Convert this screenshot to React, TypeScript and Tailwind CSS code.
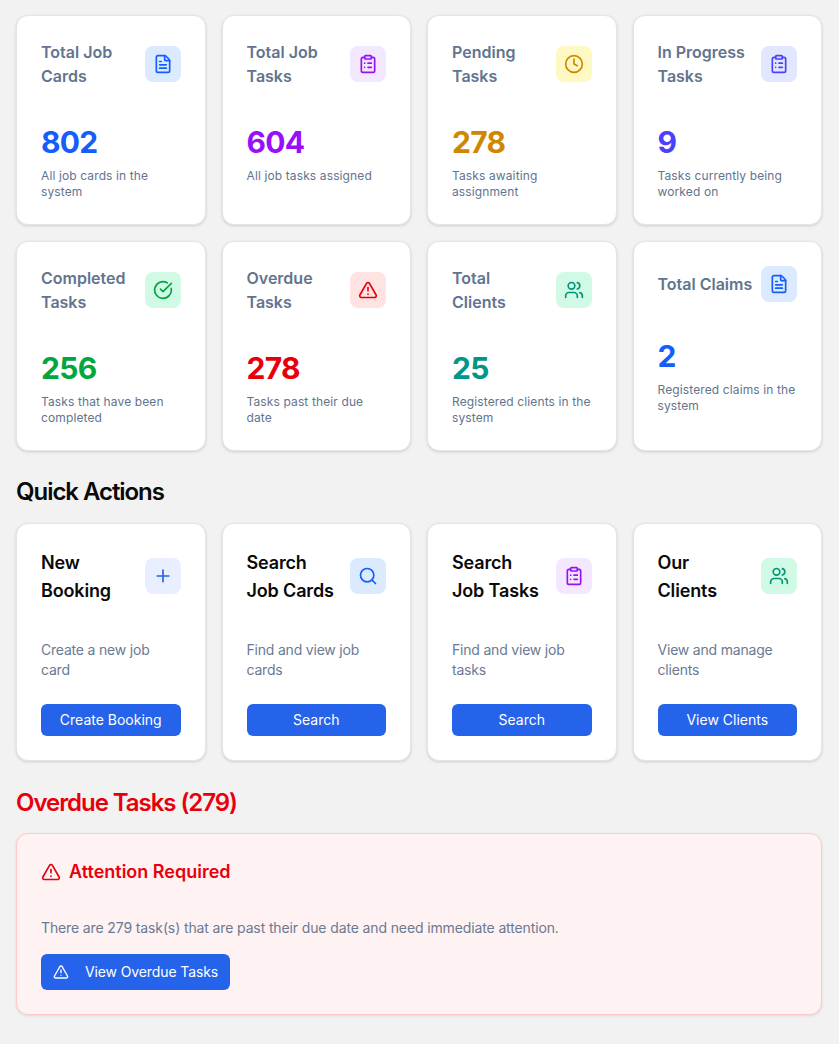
import { AlertTriangle, CircleCheckBig, ClipboardList, Clock, FileText, Plus, Search, Users } from 'lucide-react';
import type { LucideIcon } from 'lucide-react';

interface StatCardProps {
    title: string;
    value: string;
    description: string;
    icon: LucideIcon;
    valueClass: string;
    iconClass: string;
}

interface ActionCardProps {
    title: string;
    description: string;
    action: string;
    icon: LucideIcon;
    iconClass: string;
}

const stats: StatCardProps[] = [
    { title: 'Total Job Cards', value: '802', description: 'All job cards in the system', icon: FileText, valueClass: 'text-[#155dfc]', iconClass: 'bg-[#dbeafe] text-[#155dfc]' },
    { title: 'Total Job Tasks', value: '604', description: 'All job tasks assigned', icon: ClipboardList, valueClass: 'text-[#9810fa]', iconClass: 'bg-[#f3e8ff] text-[#9810fa]' },
    { title: 'Pending Tasks', value: '278', description: 'Tasks awaiting assignment', icon: Clock, valueClass: 'text-[#d08700]', iconClass: 'bg-[#fef9c2] text-[#d08700]' },
    { title: 'In Progress Tasks', value: '9', description: 'Tasks currently being worked on', icon: ClipboardList, valueClass: 'text-[#4b40fb]', iconClass: 'bg-[#e0e7ff] text-[#4b40fb]' },
    { title: 'Completed Tasks', value: '256', description: 'Tasks that have been completed', icon: CircleCheckBig, valueClass: 'text-[#00a63e]', iconClass: 'bg-[#d0fae5] text-[#00a63e]' },
    { title: 'Overdue Tasks', value: '278', description: 'Tasks past their due date', icon: AlertTriangle, valueClass: 'text-[#e7000b]', iconClass: 'bg-[#ffe2e2] text-[#e7000b]' },
    { title: 'Total Clients', value: '25', description: 'Registered clients in the system', icon: Users, valueClass: 'text-[#009689]', iconClass: 'bg-[#d0fae5] text-[#009673]' },
    { title: 'Total Claims', value: '2', description: 'Registered claims in the system', icon: FileText, valueClass: 'text-[#155dfc]', iconClass: 'bg-[#dbeafe] text-[#155dfc]' },
];

const actions: ActionCardProps[] = [
    { title: 'New Booking', description: 'Create a new job card', action: 'Create Booking', icon: Plus, iconClass: 'bg-[#e9efff] text-[#2563eb]' },
    { title: 'Search Job Cards', description: 'Find and view job cards', action: 'Search', icon: Search, iconClass: 'bg-[#dbeafe] text-[#155dfc]' },
    { title: 'Search Job Tasks', description: 'Find and view job tasks', action: 'Search', icon: ClipboardList, iconClass: 'bg-[#f3e8ff] text-[#9810fa]' },
    { title: 'Our Clients', description: 'View and manage clients', action: 'View Clients', icon: Users, iconClass: 'bg-[#d0fae5] text-[#009673]' },
];

function StatCard({ title, value, description, icon: Icon, valueClass, iconClass }: StatCardProps) {
    return (
        <div className="bg-white rounded-xl border border-[#e5e5e5] shadow-[0_1px_3px_rgba(0,0,0,0.15)] p-6 flex flex-col">
            <div className="flex items-center justify-between gap-2">
                <h3 className="text-base leading-6 font-semibold text-[#62748e]">{title}</h3>
                <div className={`w-9 h-9 rounded-lg flex items-center justify-center shrink-0 ${iconClass}`}>
                    <Icon size={20} />
                </div>
            </div>
            <div className={`mt-9 text-3xl font-bold tracking-[-0.7px] ${valueClass}`}>{value}</div>
            <p className="mt-2 text-xs tracking-[0.12px] text-[#62748e]">{description}</p>
        </div>
    );
}

function ActionCard({ title, description, action, icon: Icon, iconClass }: ActionCardProps) {
    return (
        <div className="bg-white rounded-xl border border-[#e5e5e5] shadow-[0_1px_3px_rgba(0,0,0,0.15)] px-6 pt-[25px] pb-6 flex flex-col">
            <div className="flex items-center justify-between gap-3">
                <h3 className="text-lg leading-7 font-semibold tracking-[-0.15px] text-[#0a0a0a]">{title}</h3>
                <div className={`w-9 h-9 mb-0.5 rounded-lg flex items-center justify-center shrink-0 ${iconClass}`}>
                    <Icon size={20} />
                </div>
            </div>
            <p className="mt-[35px] text-sm tracking-[-0.2px] text-[#6a7a92]">{description}</p>
            <button className="mt-6 h-8 rounded-md bg-[#2563eb] text-white text-sm font-normal">{action}</button>
        </div>
    );
}

export default function App() {
    return (
        <div className="min-h-[1044px] bg-[#f2f2f2] pt-[15px] pl-4 pr-[17px] pb-4 font-['Inter',sans-serif]">
            <div className="grid grid-cols-4 gap-4">
                {stats.map(stat => <StatCard key={stat.title} {...stat} />)}
            </div>

            <h2 className="mt-[25px] text-2xl font-semibold tracking-[-1.05px] text-[#0a0a0a]">Quick Actions</h2>
            <div className="mt-[15px] grid grid-cols-4 gap-4">
                {actions.map(action => <ActionCard key={action.title} {...action} />)}
            </div>

            <h2 className="mt-[26px] text-2xl font-semibold tracking-[-1.05px] text-[#e7000b]">Overdue Tasks (279)</h2>
            <div className="mt-[14px] rounded-xl border border-[#ffc9c9] bg-[#fef2f2] shadow-[0_1px_3px_rgba(0,0,0,0.1)] p-6">
                <div className="flex items-center gap-2 text-[#e7000b]">
                    <AlertTriangle size={20} />
                    <h3 className="text-lg leading-7 font-semibold">Attention Required</h3>
                </div>
                <p className="mt-8 text-sm tracking-[-0.125px] text-[#6a7a92]">There are 279 task(s) that are past their due date and need immediate attention.</p>
                <button className="mt-4 h-9 px-3 rounded-md bg-[#2563eb] text-white text-sm font-normal tracking-[-0.12px] inline-flex items-center gap-4">
                    <AlertTriangle size={16} />
                    View Overdue Tasks
                </button>
            </div>
        </div>
    );
}
